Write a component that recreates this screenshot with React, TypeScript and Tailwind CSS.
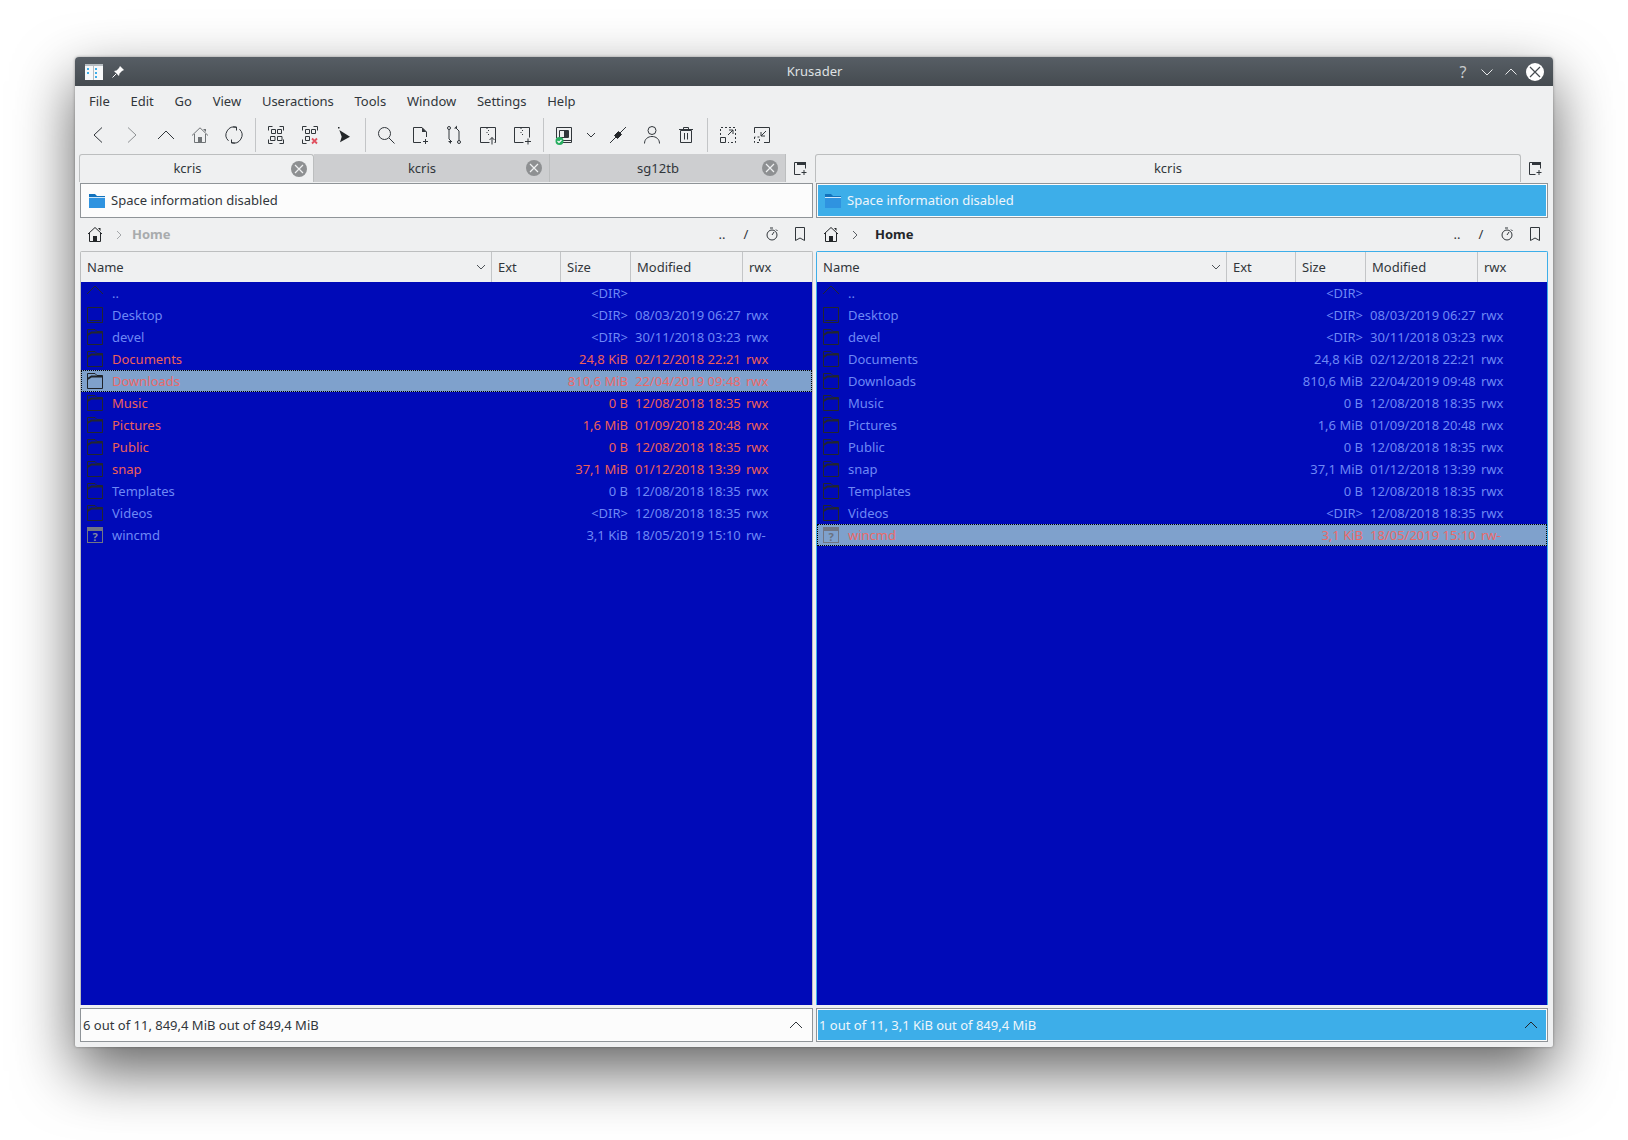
import React from "react";

const S = "#31363b";

function Ico({ size = 22, box = 22, children, stroke = S }: { size?: number; box?: number; children: React.ReactNode; stroke?: string }) {
  return (
    <svg width={size} height={size} viewBox={`0 0 ${box} ${box}`} fill="none" stroke={stroke} strokeWidth={1} className="block shrink-0">
      {children}
    </svg>
  );
}

function TBtn({ children, w = "w-[34px]" }: { children: React.ReactNode; w?: string }) {
  return <div className={`${w} h-[36px] flex items-center justify-center shrink-0`}>{children}</div>;
}
const Sep = () => (
  <div className="w-[8px] h-[36px] flex items-center justify-start shrink-0">
    <div className="ml-[4px] w-px h-[34px] bg-[#c3c5c7]" />
  </div>
);

function Toolbar() {
  return (
    <div className="h-[36px] flex items-center pl-[6px]">
      <TBtn><Ico><path d="M15 3.5 7 11l8 7.5" /></Ico></TBtn>
      <TBtn><Ico stroke="#8d9093"><path d="M7 3.5 15 11l-8 7.5" /></Ico></TBtn>
      <TBtn><Ico><path d="M3 15l8-8 8 8" /></Ico></TBtn>
      <TBtn>
        <Ico stroke="#6f7376">
          <path d="M3 11.5 11 3.8l8 7.7M5.5 10v8.5h11V10" />
          <path d="M9 13h4v5.5H9zM14 5h3v3z" fill="#6f7376" stroke="none" />
        </Ico>
      </TBtn>
      <TBtn>
        <Ico>
          <path d="M5.5 16.8A8 8 0 0 1 13.5 3.4M16.5 5.2A8 8 0 0 1 8.5 18.6" />
          <path d="M13.5 6.5v-3.5h-3.5M8.5 15.5v3.5h3.5" stroke="#31363b" />
        </Ico>
      </TBtn>
      <Sep />
      <TBtn>
        <Ico>
          <path d="M3.5 6.5v-4h4M14.5 2.5h4v4M3.5 15.5v4h4M14.5 19.5h4v-4" />
          <path d="M6.5 5.5h4v4h-4zM12.5 5.5h4v4h-4zM5.5 12.5H10v4H5.5zM12.5 12.5H17v4h-4.5z" />
        </Ico>
      </TBtn>
      <TBtn>
        <Ico>
          <path d="M3.5 6.5v-4h4M14.5 2.5h4v4M3.5 15.5v4h4" />
          <path d="M6.5 5.5h4v4h-4zM12.5 5.5h4v4h-4zM6.5 12.5h4v4h-4z" />
          <path d="M13 14.5l5 5M18 14.5l-5 5" stroke="#e0505f" strokeWidth={1.8} />
        </Ico>
      </TBtn>
      <TBtn>
        <Ico>
          <path d="M6.3 6 17 12.7 7 18.3l1.7-5.600z" fill="#232629" stroke="none" />
          <rect x="5" y="3" width="1.5" height="1.5" fill="#232629" stroke="none" />
        </Ico>
      </TBtn>
      <Sep />
      <TBtn><Ico><circle cx="9.5" cy="9.5" r="6" /><path d="M14 14l5.5 5.5" /></Ico></TBtn>
      <TBtn>
        <Ico>
          <path d="M12 18.5H4.5v-15H13L17.5 8v5" />
          <path d="M13 3.5V8h4.5z" fill={S} stroke="none" />
          <path d="M14 17.5h5M16.5 15v5" />
        </Ico>
      </TBtn>
      <TBtn>
        <Ico>
          <circle cx="6" cy="4" r="1.5" />
          <circle cx="16" cy="18" r="1.5" />
          <path d="M6 5.5V15l3 3M16 16.5V7l-3-3" />
          <path d="M5 17h3v3zM14 1.5v3h-3z" fill={S} stroke="none" />
        </Ico>
      </TBtn>
      <TBtn>
        <Ico>
          <path d="M12.5 18.5h-9v-15h15v15h-1" />
          <path d="M10 4v1M11.5 6v1M10 8v1M11.5 10v1" />
          <path d="M15 20.5v-7M12.5 16l2.5-2.5 2.5 2.500" />
        </Ico>
      </TBtn>
      <TBtn>
        <Ico>
          <path d="M12.5 18.5h-9v-15h15v10" />
          <path d="M10 4v1M11.5 6v1M10 8v1M11.5 10v1" />
          <path d="M14 17.5h6M17 14.5v6" />
        </Ico>
      </TBtn>
      <Sep />
      <TBtn>
        <Ico>
          <path d="M3.5 14V3.5h15v15H10" />
          <path d="M6.5 6.5h9v7h-9z" />
          <path d="M11 7h4v6h-4z" fill={S} stroke="none" />
          <path d="M10 16.5h8.5" />
          <circle cx="6.5" cy="17" r="4" fill="#27ae60" stroke="none" />
          <path d="M4.5 17L6 18.5 8.500 16" stroke="#fff" strokeWidth={1.2} />
        </Ico>
      </TBtn>
      <TBtn w="w-[20px]">
        <Ico size={10} box={10}><path d="M1 3l4 4 4-4" /></Ico>
      </TBtn>
      <TBtn>
        <Ico>
          <path d="M3 19 19 3" />
          <path d="M7.5 11.5l4-4 3 3-4 4z" fill="#232629" stroke="#232629" />
        </Ico>
      </TBtn>
      <TBtn>
        <Ico>
          <circle cx="11" cy="6.5" r="4" />
          <path d="M3.5 19.5C3.500 15 7 12.5 11 12.5s7.5 2.5 7.5 7" />
        </Ico>
      </TBtn>
      <TBtn>
        <Ico>
          <path d="M5.5 6.5h11v12h-11zM4 5.5h14M8.5 5V3.500h5V5M9.5 9v6.5M12.5 9v6.5" />
        </Ico>
      </TBtn>
      <Sep />
      <TBtn>
        <Ico>
          <path d="M3.5 11V3.500h15v15H11" strokeDasharray="2 2" />
          <path d="M3.5 13.5h5v5h-5zM11 11l5-5M12 6h4v4" />
        </Ico>
      </TBtn>
      <TBtn>
        <Ico>
          <path d="M3.5 9V3.500h15v15H13" />
          <path d="M3.5 13v5.500h5V13z" strokeDasharray="2 2" />
          <path d="M15 7l-5 5M10 8v4h4" />
        </Ico>
      </TBtn>
    </div>
  );
}

function NewTabIcon() {
  return (
    <Ico size={14} box={14}>
      <path d="M7.5 13.5h-6v-12h11v6" />
      <path d="M4 1h9v3H4z" fill={S} stroke="none" />
      <path d="M8.5 11.5h5M11 9v5" />
    </Ico>
  );
}

function CloseDot() {
  return (
    <div className="w-[16px] h-[16px] rounded-full bg-[#8e9092] flex items-center justify-center shrink-0">
      <svg width="10" height="10" viewBox="0 0 10 10" stroke="#eff0f1" strokeWidth={1.2} className="block">
        <path d="M1 1l8 8M9 1l-8 8" />
      </svg>
    </div>
  );
}

function Tab({ label, active, close }: { label: string; active?: boolean; close?: boolean }) {
  const pad = !close ? "px-[7px]" : active ? "pl-[4px] pr-[6px]" : "pl-[4px] pr-[7px]";
  return (
    <div
      className={`h-[28px] flex items-center min-w-0 ${pad} ${
        active
          ? "bg-[#eff0f1] border-t border-l border-r border-[#bcbebf] rounded-t-[3px]"
          : "bg-[#cdced0] border-r border-[#bcbebf]"
      }`}
    >
      <span className="flex-1 text-center text-[#31363b]">{label}</span>
      {close && <CloseDot />}
    </div>
  );
}

function FolderBlue() {
  return (
    <svg width="16" height="16" viewBox="0 0 16 16" className="block shrink-0">
      <path d="M0 1h6l2 2h8v12H0z" fill="#1272bd" />
      <path d="M0 4h16v11H0z" fill="#2f93e0" />
      <path d="M0 4h16v1H0z" fill="#cfe8fa" />
    </svg>
  );
}

type Kind = "up" | "desktop" | "folder" | "unknown";
type Row = { name: string; size: string; date: string; rwx: string; kind: Kind };

const ROWS: Row[] = [
  { name: "..", size: "<DIR>", date: "", rwx: "", kind: "up" },
  { name: "Desktop", size: "<DIR>", date: "08/03/2019 06:27", rwx: "rwx", kind: "desktop" },
  { name: "devel", size: "<DIR>", date: "30/11/2018 03:23", rwx: "rwx", kind: "folder" },
  { name: "Documents", size: "24,8 KiB", date: "02/12/2018 22:21", rwx: "rwx", kind: "folder" },
  { name: "Downloads", size: "810,6 MiB", date: "22/04/2019 09:48", rwx: "rwx", kind: "folder" },
  { name: "Music", size: "0 B", date: "12/08/2018 18:35", rwx: "rwx", kind: "folder" },
  { name: "Pictures", size: "1,6 MiB", date: "01/09/2018 20:48", rwx: "rwx", kind: "folder" },
  { name: "Public", size: "0 B", date: "12/08/2018 18:35", rwx: "rwx", kind: "folder" },
  { name: "snap", size: "37,1 MiB", date: "01/12/2018 13:39", rwx: "rwx", kind: "folder" },
  { name: "Templates", size: "0 B", date: "12/08/2018 18:35", rwx: "rwx", kind: "folder" },
  { name: "Videos", size: "<DIR>", date: "12/08/2018 18:35", rwx: "rwx", kind: "folder" },
  { name: "wincmd", size: "3,1 KiB", date: "18/05/2019 15:10", rwx: "rw-", kind: "unknown" },
];

function RowIcon({ kind, focus }: { kind: Kind; focus: boolean }) {
  const c = focus ? "#1f2329" : "#23262e";
  if (kind === "up")
    return (
      <svg width="16" height="16" viewBox="0 0 16 16" fill="none" stroke={c} className="block shrink-0">
        <path d="M0 9 8 1l8 8" />
      </svg>
    );
  if (kind === "desktop")
    return (
      <svg width="16" height="16" viewBox="0 0 16 16" fill="none" stroke={c} className="block shrink-0">
        <path d="M.5.5h15v15H.5zM2.5 13.500h11" />
      </svg>
    );
  if (kind === "unknown")
    return (
      <div className={`w-[16px] h-[16px] border border-[#717684] border-t-[4px] flex items-center justify-center text-[11px] font-bold leading-none shrink-0 ${focus ? "text-[#6a7180]" : "text-[#8088a0]"}`}>
        ?
      </div>
    );
  return (
    <svg width="16" height="16" viewBox="0 0 16 16" fill="none" stroke={c} className="block shrink-0">
      <path d="M.5.5H8l2 2h5.500v13H.5z" />
      <path d="M.5 6l4-2.500h11" strokeWidth={2} />
    </svg>
  );
}

function Panel({
  active,
  tabs,
  selected,
  focus,
  status,
  className,
}: {
  active?: boolean;
  tabs: { label: string; active?: boolean }[];
  selected: string[];
  focus: string;
  status: string;
  className: string;
}) {
  const multi = tabs.length > 1;
  return (
    <div className={`flex flex-col min-w-0 ${className}`}>
      <div className="h-[28px] flex -ml-px">
        <div className={`flex-1 grid min-w-0 ${multi ? "grid-cols-[235px_236px_236px]" : "grid-cols-1"}`}>
          {tabs.map((t, i) => (
            <Tab key={i} label={t.label} active={t.active} close={multi} />
          ))}
        </div>
        <div className="w-[27px] flex items-center justify-center shrink-0">
          <NewTabIcon />
        </div>
      </div>

      <div className="mt-px h-[35px] border border-[#8f9498]">
        <div className={`h-full flex items-center border pl-[7px] ${active ? "bg-[#3daee9] border-[#fcfcfc] text-[#eff6fb]" : "bg-[#fcfcfc] border-[#fcfcfc] text-[#31363b]"}`}>
          <FolderBlue />
          <span className="ml-[6px]">Space information disabled</span>
        </div>
      </div>

      <div className="h-[33px] flex items-center pl-[7px]">
        <div className="-mt-px">
          <Ico size={16} box={16} stroke="#232629">
            <path d="M1 8l7-6.500L15 8M2.500 7v8.500h11V7" />
            <path d="M6 10h4v5.500H6zM11 2h2.500v3z" fill="#232629" stroke="none" />
          </Ico>
        </div>
        <div className="ml-[11px] w-[10px] flex justify-center">
          <Ico size={10} box={10} stroke={active ? "#5a5f64" : "#a4a7aa"}>
            <path d="M3 1l4 4-4 4" />
          </Ico>
        </div>
        <span className={`font-bold ${active ? "ml-[15px] text-[#232629]" : "ml-[8px] text-[#a8abad]"}`}>Home</span>
        <div className="ml-auto flex items-center text-[#31363b]">
          <span className="w-[22px] text-center">..</span>
          <span className="w-[26px] text-center">/</span>
          <div className="w-[28px] flex justify-center pr-[2px] -mt-px">
            <Ico size={14} box={14}>
              <circle cx="7" cy="8" r="5" />
              <path d="M5 1h3M7 8l2-3M11 2.500l1.500 1.500" />
            </Ico>
          </div>
          <div className="w-[26px] flex justify-center -mt-px">
            <Ico size={14} box={14}>
              <path d="M2.500.5h9v13L7 11l-4.500 2.500z" />
            </Ico>
          </div>
        </div>
      </div>

      <div className={`flex-1 min-h-0 flex flex-col border rounded-t-[2px] ${active ? "border-[#3daee9]" : "border-[#bcbebf]"} border-b-0`}>
        <div className="h-[30px] flex items-center text-[#31363b] bg-[#eff0f1] shrink-0">
          <div className="flex-1 h-full flex items-center pl-[6px] pr-[5px] justify-between border-r border-[#c3c5c7]">
            <span>Name</span>
            <Ico size={10} box={10} stroke="#4d5257"><path d="M1 3l4 4 4-4" /></Ico>
          </div>
          <div className="w-[69px] h-full flex items-center pl-[6px] border-r border-[#c3c5c7]">Ext</div>
          <div className="w-[70px] h-full flex items-center pl-[6px] border-r border-[#c3c5c7]">Size</div>
          <div className="w-[112px] h-full flex items-center pl-[6px] border-r border-[#c3c5c7]">Modified</div>
          <div className="w-[69px] h-full flex items-center pl-[6px]">rwx</div>
        </div>
        <div className="flex-1 min-h-0 bg-[#000ab8]">
          {ROWS.map((r) => {
            const sel = selected.includes(r.name);
            const foc = r.name === focus;
            const tc = foc ? "text-[#ea6a6a]" : sel ? "text-[#ee6058]" : "text-[#6e88f5]";
            return (
              <div
                key={r.name}
                className={`h-[22px] flex items-center ${tc} ${foc ? "bg-[#7fa1cc] border border-dotted border-black" : "px-px"}`}
              >
                <div className="flex-1 flex items-center min-w-0 pl-[5px]">
                  <RowIcon kind={r.kind} focus={foc} />
                  <span className="ml-[9px] pt-px">{r.name}</span>
                </div>
                <div className="w-[68px]" />
                <div className="w-[70px] text-right pr-[2px] pt-px whitespace-nowrap">{r.size}</div>
                <div className="w-[112px] pl-[5px] pt-px whitespace-nowrap">{r.date}</div>
                <div className="w-[69px] pl-[4px] pt-px">{r.rwx}</div>
              </div>
            );
          })}
        </div>
      </div>

      <div className="mt-[3px] h-[34px] border border-[#8f9498]">
        <div className={`h-full flex items-center justify-between pl-px pr-[8px] border ${active ? "bg-[#3daee9] border-[#fcfcfc] text-[#eff6fb]" : "bg-[#fcfcfc] border-[#fcfcfc] text-[#31363b]"}`}>
          <span className="pt-px">{status}</span>
          <Ico size={14} box={14} stroke={active ? "#232629" : "#31363b"}><path d="M1 10l6-6 6 6" /></Ico>
        </div>
      </div>
    </div>
  );
}

const MENU = ["File", "Edit", "Go", "View", "Useractions", "Tools", "Window", "Settings", "Help"];

export default function App() {
  return (
    <div className="w-[1628px] h-[1140px] bg-white overflow-hidden flex justify-center pt-[57px] font-['Noto_Sans',sans-serif] text-[13px] leading-none">
      <div className="w-[1478px] h-[990px] flex flex-col bg-[#eff0f1] rounded-t-[4px] rounded-b-[2px] shadow-[0_24px_60px_rgba(0,0,0,0.62),0_0_3px_rgba(0,0,0,0.35)]">
        <div className="h-[29px] shrink-0 flex items-center pl-[10px] pr-[9px] rounded-t-[4px] bg-gradient-to-b from-[#575e65] to-[#454b50]">
          <div className="flex-1 flex items-center">
            <svg width="18" height="16" viewBox="0 0 18 16" className="block shrink-0">
              <path d="M0 0h18v16H0z" fill="#f7f8f9" />
              <path d="M0 0h18v2H0zM8 2h1v14H8z" fill="#b6bcc1" />
              <path d="M2 4h2v2H2zM10 4h2v2h-2zM2 8h2v2H2zM10 8h2v2h-2zM10 12h2v2h-2z" fill="#3daee9" />
            </svg>
            <svg width="14" height="14" viewBox="0 0 14 14" className="ml-[8px] block">
              <path d="M9 1l4 4-2 1-2.500 2.500L8 11 3 6l2.500-.5L8 3z" fill="#fcfcfc" />
              <path d="M5 9l-3.500 3.500" stroke="#fcfcfc" />
            </svg>
          </div>
          <span className="text-[#dfe1e3]">Krusader</span>
          <div className="flex-1 flex items-center justify-end">
            <span className="w-[24px] text-center text-[16px] text-[#c7cacc]">?</span>
            <div className="w-[24px] flex justify-center">
              <Ico size={14} box={14} stroke="#e6e8e9"><path d="M1.500 4.500 7 10l5.500-5.500" /></Ico>
            </div>
            <div className="w-[24px] flex justify-center">
              <Ico size={14} box={14} stroke="#e6e8e9"><path d="M1.500 9.500 7 4l5.500 5.500" /></Ico>
            </div>
            <div className="w-[18px] h-[18px] ml-[3px] rounded-full bg-white flex items-center justify-center">
              <svg width="12" height="12" viewBox="0 0 12 12" stroke="#454b50" strokeWidth={1.2} className="block">
                <path d="M1 1l10 10M11 1 1 11" />
              </svg>
            </div>
          </div>
        </div>

        <div className="h-[31px] shrink-0 flex items-center gap-[20.75px] pl-[14px] text-[#31363b]">
          {MENU.map((m) => (
            <span key={m}>{m}</span>
          ))}
        </div>

        <Toolbar />

        <div className="mt-px flex-1 min-h-0 flex gap-[3px] px-[5px] pb-[5px]">
          <Panel
            className="w-[733px]"
            tabs={[{ label: "kcris", active: true }, { label: "kcris" }, { label: "sg12tb" }]}
            selected={["Documents", "Downloads", "Music", "Pictures", "Public", "snap"]}
            focus="Downloads"
            status="6 out of 11, 849,4 MiB out of 849,4 MiB"
          />
          <Panel
            active
            className="flex-1"
            tabs={[{ label: "kcris", active: true }]}
            selected={[]}
            focus="wincmd"
            status="1 out of 11, 3,1 KiB out of 849,4 MiB"
          />
        </div>
      </div>
    </div>
  );
}
